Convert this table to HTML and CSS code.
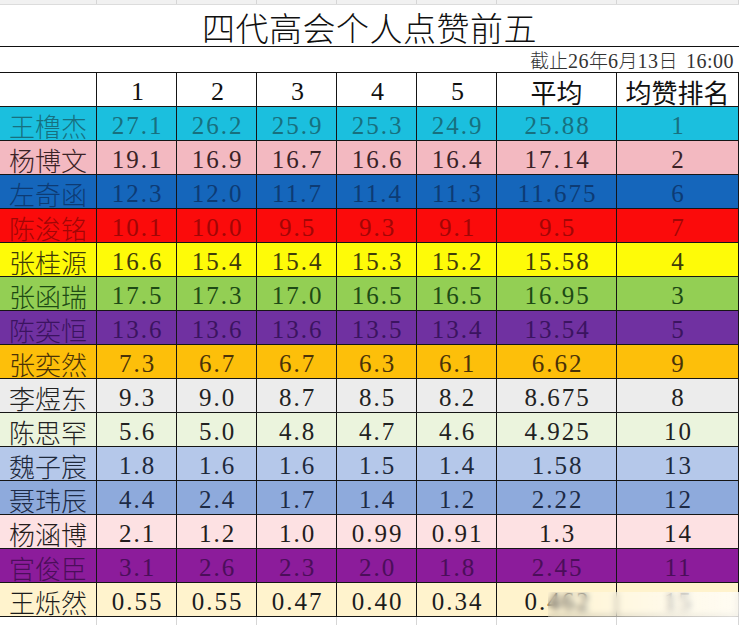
FILE: index.html
```html
<!DOCTYPE html>
<html lang="zh">
<head>
<meta charset="utf-8">
<title>四代高会个人点赞前五</title>
<link rel="stylesheet" href="styles.css">
</head>
<body>
<div class="sheet">
  <div class="grid strip">
    <div class="gc"></div><div class="gc"></div><div class="gc"></div><div class="gc"></div><div class="gc"></div><div class="gc"></div><div class="gc"></div><div class="gc"></div>
  </div>
  <div class="title">四代高会个人点赞前五</div>
  <div class="date">截止<span class="num">26</span>年<span class="num">6</span>月<span class="num">13</span>日&nbsp;&nbsp;<span class="num">16:00</span></div>
  <div class="grid row head">
    <div class="c"></div>
    <div class="c hn">1</div><div class="c hn">2</div><div class="c hn">3</div><div class="c hn">4</div><div class="c hn">5</div>
    <div class="c hz">平均</div><div class="c hz">均赞排名</div>
  </div>

  <div class="grid row r1"><div class="c name">王橹杰</div><div class="c">27.1</div><div class="c">26.2</div><div class="c">25.9</div><div class="c">25.3</div><div class="c">24.9</div><div class="c">25.88</div><div class="c">1</div></div>
  <div class="grid row r2"><div class="c name">杨博文</div><div class="c">19.1</div><div class="c">16.9</div><div class="c">16.7</div><div class="c">16.6</div><div class="c">16.4</div><div class="c">17.14</div><div class="c">2</div></div>
  <div class="grid row r3"><div class="c name">左奇函</div><div class="c">12.3</div><div class="c">12.0</div><div class="c">11.7</div><div class="c">11.4</div><div class="c">11.3</div><div class="c">11.675</div><div class="c">6</div></div>
  <div class="grid row r4"><div class="c name">陈浚铭</div><div class="c">10.1</div><div class="c">10.0</div><div class="c">9.5</div><div class="c">9.3</div><div class="c">9.1</div><div class="c">9.5</div><div class="c">7</div></div>
  <div class="grid row r5"><div class="c name">张桂源</div><div class="c">16.6</div><div class="c">15.4</div><div class="c">15.4</div><div class="c">15.3</div><div class="c">15.2</div><div class="c">15.58</div><div class="c">4</div></div>
  <div class="grid row r6"><div class="c name">张函瑞</div><div class="c">17.5</div><div class="c">17.3</div><div class="c">17.0</div><div class="c">16.5</div><div class="c">16.5</div><div class="c">16.95</div><div class="c">3</div></div>
  <div class="grid row r7"><div class="c name">陈奕恒</div><div class="c">13.6</div><div class="c">13.6</div><div class="c">13.6</div><div class="c">13.5</div><div class="c">13.4</div><div class="c">13.54</div><div class="c">5</div></div>
  <div class="grid row r8"><div class="c name">张奕然</div><div class="c">7.3</div><div class="c">6.7</div><div class="c">6.7</div><div class="c">6.3</div><div class="c">6.1</div><div class="c">6.62</div><div class="c">9</div></div>
  <div class="grid row r9"><div class="c name">李煜东</div><div class="c">9.3</div><div class="c">9.0</div><div class="c">8.7</div><div class="c">8.5</div><div class="c">8.2</div><div class="c">8.675</div><div class="c">8</div></div>
  <div class="grid row r10"><div class="c name">陈思罕</div><div class="c">5.6</div><div class="c">5.0</div><div class="c">4.8</div><div class="c">4.7</div><div class="c">4.6</div><div class="c">4.925</div><div class="c">10</div></div>
  <div class="grid row r11"><div class="c name">魏子宸</div><div class="c">1.8</div><div class="c">1.6</div><div class="c">1.6</div><div class="c">1.5</div><div class="c">1.4</div><div class="c">1.58</div><div class="c">13</div></div>
  <div class="grid row r12"><div class="c name">聂玮辰</div><div class="c">4.4</div><div class="c">2.4</div><div class="c">1.7</div><div class="c">1.4</div><div class="c">1.2</div><div class="c">2.22</div><div class="c">12</div></div>
  <div class="grid row r13"><div class="c name">杨涵博</div><div class="c">2.1</div><div class="c">1.2</div><div class="c">1.0</div><div class="c">0.99</div><div class="c">0.91</div><div class="c">1.3</div><div class="c">14</div></div>
  <div class="grid row r14"><div class="c name">官俊臣</div><div class="c">3.1</div><div class="c">2.6</div><div class="c">2.3</div><div class="c">2.0</div><div class="c">1.8</div><div class="c">2.45</div><div class="c">11</div></div>
  <div class="grid row r15"><div class="c name">王烁然</div><div class="c">0.55</div><div class="c">0.55</div><div class="c">0.47</div><div class="c">0.40</div><div class="c">0.34</div><div class="c">0.462</div><div class="c">15</div></div>

  <div class="grid tail">
    <div class="gc"></div><div class="gc"></div><div class="gc"></div><div class="gc"></div><div class="gc"></div><div class="gc"></div><div class="gc"></div><div class="gc"></div>
  </div>

  <div class="wm-blur"></div>
</div>
</body>
</html>
```

FILE: styles.css
```css
html, body {
  margin: 0;
  padding: 0;
  background: #ffffff;
}

.sheet {
  position: relative;
  width: 739px;
  height: 626px;
  overflow: hidden;
  font-family: "Liberation Serif", "Noto Sans CJK SC", serif;
  color: #222;
}

.grid {
  display: grid;
  grid-template-columns: 97px repeat(5, 80px) 120px 122px;
  box-sizing: border-box;
}

.strip {
  height: 5px;
  background: #f1f1f1;
  border-bottom: 1px solid #dcdcdc;
}

.strip .gc,
.tail .gc {
  border-right: 1px solid #d6d6d6;
}

.tail {
  height: 8px;
}

.title {
  height: 42px;
  box-sizing: border-box;
  border-bottom: 1px solid #111;
  display: flex;
  align-items: center;
  justify-content: center;
  padding-top: 2px;
  font-family: "Noto Sans CJK SC", sans-serif;
  font-weight: 300;
  font-size: 33px;
  letter-spacing: 0.5px;
  color: #111;
}

.date {
  height: 26px;
  box-sizing: border-box;
  border-bottom: 1px solid #111;
  text-align: right;
  padding-right: 5px;
  line-height: 26px;
  font-family: "Noto Sans CJK SC", sans-serif;
  font-weight: 300;
  font-size: 19px;
  color: #333;
  white-space: nowrap;
}

.date .num {
  font-family: "Liberation Serif", serif;
  font-size: 20px;
  letter-spacing: 0.5px;
}

.row {
  height: 34px;
  border-bottom: 1px solid #151515;
}

.c {
  border-right: 1px solid #151515;
  display: flex;
  align-items: center;
  justify-content: center;
  font-size: 25px;
  letter-spacing: 2px;
  white-space: nowrap;
  padding-left: 2px;
}

.name {
  font-family: "Noto Sans CJK SC", sans-serif;
  font-weight: 300;
  font-size: 26px;
  letter-spacing: 0;
  padding-left: 0;
}

.head {
  background: #ffffff;
  color: #111;
}

.hn {
  font-size: 26px;
  letter-spacing: 0;
}

.hz {
  font-family: "Noto Sans CJK SC", sans-serif;
  font-size: 26px;
  letter-spacing: 0;
  padding-left: 0;
}

.r1 { background: #1bbfde; color: #17707f; }
.r2 { background: #f3b9c1; color: #3a2226; }
.r3 { background: #1566bb; color: #0d3b74; }
.r4 { background: #fb0b0b; color: #a10606; }
.r5 { background: #fefb08; color: #3f3b0a; }
.r6 { background: #93cf54; color: #1d4a14; }
.r7 { background: #7031a1; color: #3b1460; }
.r8 { background: #fdbf0a; color: #4a3208; }
.r9 { background: #ececec; color: #222; }
.r10 { background: #ebf4dd; color: #222; }
.r11 { background: #b5c8ea; color: #1f2a3c; }
.r12 { background: #8eaadc; color: #1d2a46; }
.r13 { background: #fde1e3; color: #241c1c; }
.r14 { background: #8c1c9b; color: #4b0e5a; }
.r15 { background: #fff3cd; color: #1c1c1c; }

.wm-blur {
  position: absolute;
  left: 548px;
  top: 592px;
  width: 191px;
  height: 25px;
  backdrop-filter: blur(3px);
  background: linear-gradient(90deg, rgba(255, 255, 255, 0.1), rgba(255, 255, 255, 0.55) 60%, rgba(255, 255, 255, 0.75));
}
```
